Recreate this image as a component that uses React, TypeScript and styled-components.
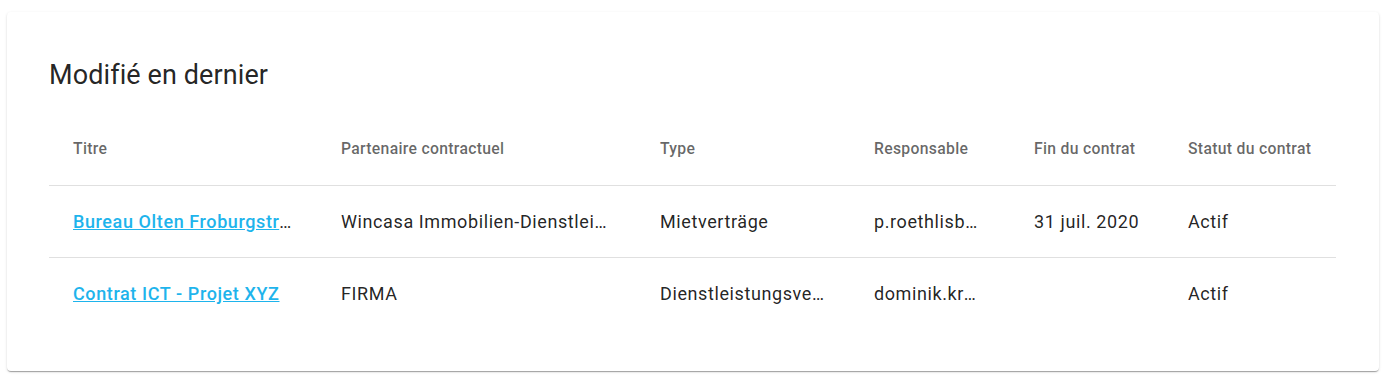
import styled, { createGlobalStyle } from "styled-components";

const GlobalStyle = createGlobalStyle`
  body {
    margin: 0;
    background: #fff;
    font-family: Roboto, "Liberation Sans", sans-serif;
  }
`;

const Page = styled.div`
  padding: 12px 9px 8px 7px;
`;

const Card = styled.div`
  background: #fff;
  border-radius: 4px;
  box-shadow: 0px 2px 1px -1px rgba(0, 0, 0, 0.2),
    0px 1px 1px 0px rgba(0, 0, 0, 0.14), 0px 1px 3px 0px rgba(0, 0, 0, 0.12);
  padding: 45px 43px 42px 42px;
`;

const Title = styled.h2`
  margin: 0;
  font-size: 27px;
  font-weight: 400;
  line-height: 36px;
  color: rgba(0, 0, 0, 0.87);
  letter-spacing: 0.1px;
`;

const Table = styled.table`
  width: 100%;
  margin-top: 19px;
  border-collapse: collapse;
  table-layout: fixed;
`;

const HeadCell = styled.th<{ $w: number }>`
  box-sizing: border-box;
  width: ${(p) => p.$w}px;
  height: 73px;
  padding: 0 24px;
  text-align: left;
  font-size: 15.75px;
  font-weight: 500;
  color: rgba(0, 0, 0, 0.6);
  letter-spacing: 0.3px;
  border-bottom: 1px solid #e0e0e0;
  white-space: nowrap;
`;

const Row = styled.tr<{ $last?: boolean }>`
  td {
    border-bottom: ${(p) => (p.$last ? "none" : "1px solid #e0e0e0")};
  }
`;

const Cell = styled.td<{ $padRight?: number }>`
  box-sizing: border-box;
  height: 72px;
  padding: 0 ${(p) => p.$padRight ?? 24}px 0 24px;
  font-size: 18px;
  color: rgba(0, 0, 0, 0.87);
  letter-spacing: 0.6px;
  white-space: nowrap;
  overflow: hidden;
  text-overflow: ellipsis;
`;

const Link = styled.a`
  color: #1eb4ec;
  font-weight: 500;
  text-decoration: underline;
  cursor: pointer;
`;

const columns = [
  { label: "Titre", w: 268 },
  { label: "Partenaire contractuel", w: 319 },
  { label: "Type", w: 214 },
  { label: "Responsable", w: 160 },
  { label: "Fin du contrat", w: 154 },
  { label: "Statut du contrat", w: 172 },
];

const rows = [
  {
    title: "Bureau Olten Froburgstrasse 2",
    partner: "Wincasa Immobilien-Dienstleistungen AG",
    type: "Mietverträge",
    owner: "p.roethlisberger",
    end: "31 juil. 2020",
    status: "Actif",
  },
  {
    title: "Contrat ICT - Projet XYZ",
    partner: "FIRMA",
    type: "Dienstleistungsverträge",
    owner: "dominik.kramer",
    end: "",
    status: "Actif",
  },
];

export default function App() {
  return (
    <>
      <GlobalStyle />
      <Page>
        <Card>
          <Title>Modifié en dernier</Title>
          <Table>
            <thead>
              <tr>
                {columns.map((c) => (
                  <HeadCell key={c.label} $w={c.w}>
                    {c.label}
                  </HeadCell>
                ))}
              </tr>
            </thead>
            <tbody>
              {rows.map((r, i) => (
                <Row key={r.title} $last={i === rows.length - 1}>
                  <Cell>
                    <Link>{r.title}</Link>
                  </Cell>
                  <Cell>{r.partner}</Cell>
                  <Cell>{r.type}</Cell>
                  <Cell $padRight={28}>{r.owner}</Cell>
                  <Cell>{r.end}</Cell>
                  <Cell>{r.status}</Cell>
                </Row>
              ))}
            </tbody>
          </Table>
        </Card>
      </Page>
    </>
  );
}
